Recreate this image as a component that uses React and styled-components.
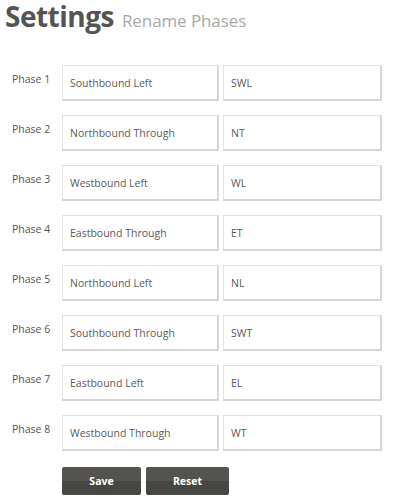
import React, { useState } from 'react'
import styled, { createGlobalStyle } from 'styled-components'

const GlobalStyle = createGlobalStyle`
    body {
        margin: 0;
        background: #fff;
        font-family: 'Open Sans', 'Liberation Sans', sans-serif;
    }
`

const Page = styled.div`
    padding: 0 0 0 5px;
    width: 395px;
`

const Header = styled.h1`
    margin: 0;
    height: 38px;
    display: flex;
    align-items: baseline;
    gap: 8px;
    font-size: 28px;
    line-height: 33px;
    font-weight: 700;
    color: #545454;
    letter-spacing: -0.5px;
`

const SubTitle = styled.span`
    font-size: 17px;
    font-weight: 400;
    color: #a9a9a9;
    letter-spacing: -0.1px;
`

const Form = styled.form`
    display: flex;
    flex-direction: column;
    gap: 14px;
    margin-top: 27px;
`

const Row = styled.div`
    display: flex;
    align-items: flex-start;
`

const Label = styled.label`
    width: 50px;
    padding: 7px 0 0 7px;
    font-size: 10.5px;
    color: #555;
`

const Field = styled.input`
    box-sizing: border-box;
    width: ${props => props.$width}px;
    height: 36px;
    margin-right: 4px;
    padding: 0 7px;
    border: 1px solid #e2e2e2;
    border-right: 2px solid #d6d6d6;
    border-bottom: 2px solid #d6d6d6;
    background: #fff;
    font-family: 'Open Sans', 'Liberation Sans', sans-serif;
    font-size: 10.5px;
    color: #5a5a5a;
    outline: none;
`

const Actions = styled.div`
    display: flex;
    gap: 5px;
    margin: 16px 0 0 57px;
`

const Button = styled.button`
    width: ${props => props.$width}px;
    height: 28px;
    border: none;
    border-radius: 2px;
    background: linear-gradient(to bottom, #55534f 0%, #55534f 50%, #464742 50%, #464742 100%);
    color: #fff;
    font-family: 'Open Sans', 'Liberation Sans', sans-serif;
    font-size: 10.5px;
    font-weight: 700;
    cursor: pointer;
`

const initialPhases = [
    { name: 'Southbound Left', short: 'SWL' },
    { name: 'Northbound Through', short: 'NT' },
    { name: 'Westbound Left', short: 'WL' },
    { name: 'Eastbound Through', short: 'ET' },
    { name: 'Northbound Left', short: 'NL' },
    { name: 'Southbound Through', short: 'SWT' },
    { name: 'Eastbound Left', short: 'EL' },
    { name: 'Westbound Through', short: 'WT' }
]

const App = () => {
    const [phases, setPhases] = useState(initialPhases)

    const update = (index, key, value) => {
        setPhases(prev => prev.map((p, i) => (i === index ? { ...p, [key]: value } : p)))
    }

    return (
        <Page>
            <GlobalStyle />
            <Header>
                Settings
                <SubTitle>Rename Phases</SubTitle>
            </Header>
            <Form onSubmit={e => e.preventDefault()}>
                {phases.map((phase, index) => (
                    <Row key={index}>
                        <Label>Phase {index + 1}</Label>
                        <Field
                            $width={157}
                            value={phase.name}
                            onChange={e => update(index, 'name', e.target.value)}
                        />
                        <Field
                            $width={159}
                            value={phase.short}
                            onChange={e => update(index, 'short', e.target.value)}
                        />
                    </Row>
                ))}
            </Form>
            <Actions>
                <Button $width={79}>Save</Button>
                <Button $width={83} onClick={() => setPhases(initialPhases)}>Reset</Button>
            </Actions>
        </Page>
    )
}

export default App
